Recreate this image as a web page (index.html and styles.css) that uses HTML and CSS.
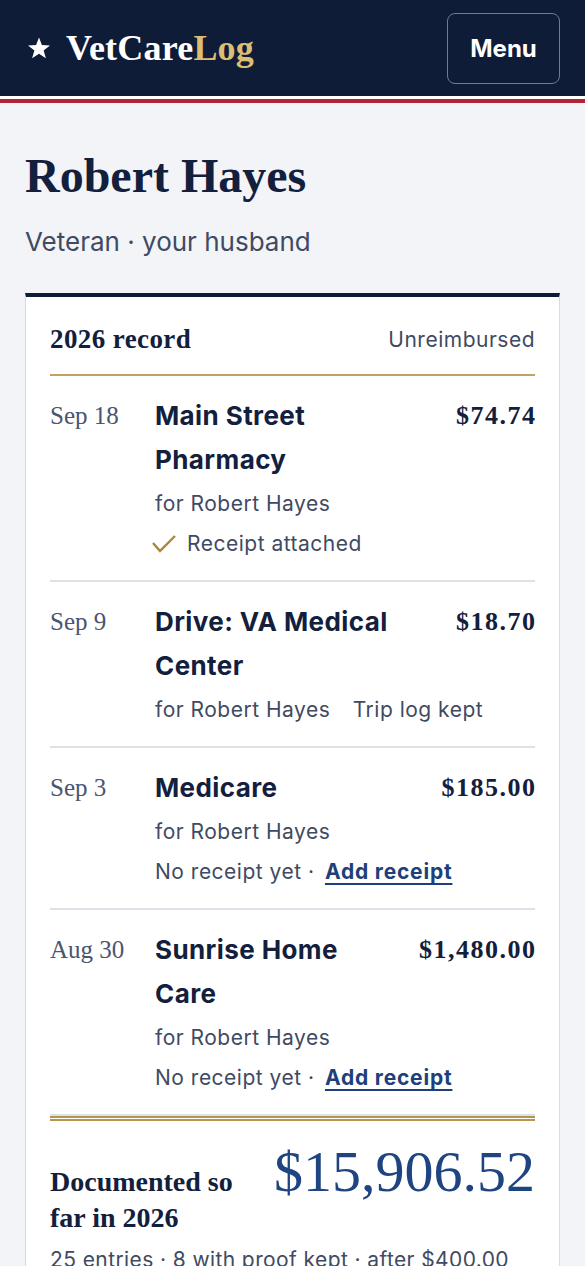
FILE: index.html
```html
<!DOCTYPE html>
<html lang="en">

<head>
  <meta charset="UTF-8">
  <meta name="viewport" content="width=device-width, initial-scale=1.0">
  <title>VetCareLog - Robert Hayes</title>
  <link rel="stylesheet" href="styles.css">
</head>

<body>
  <header class="topbar">
    <a href="#" class="brand">
      <svg class="brand-star" viewBox="0 0 24 24" width="24" height="24" aria-hidden="true">
        <path d="M12 1.5l2.9 7.6 8.1.3-6.4 5 2.3 7.9L12 17.7l-6.9 4.6 2.3-7.9-6.4-5 8.1-.3z" fill="#fff" />
      </svg>
      <span>VetCare<span class="brand-log">Log</span></span>
    </a>
    <button class="menu-button">Menu</button>
  </header>
  <div class="flag-stripe"></div>

  <main class="page">
    <h1 class="person-name">Robert Hayes</h1>
    <p class="person-role">Veteran · your husband</p>

    <section class="record-card">
      <div class="record-head">
        <h2>2026 record</h2>
        <span class="record-tag">Unreimbursed</span>
      </div>

      <div class="entry">
        <div class="entry-date">Sep 18</div>
        <div class="entry-body">
          <div class="entry-top">
            <div class="entry-title">Main Street Pharmacy</div>
            <div class="entry-amount">$74.74</div>
          </div>
          <div class="entry-meta first">for Robert Hayes</div>
          <div class="entry-meta proof">
            <svg viewBox="0 0 26 20" width="26" height="20" aria-hidden="true">
              <path d="M2 9l7 8L24 2" fill="none" stroke="#a98738" stroke-width="2.4" />
            </svg>
            Receipt attached
          </div>
        </div>
      </div>

      <div class="entry">
        <div class="entry-date">Sep 9</div>
        <div class="entry-body">
          <div class="entry-top">
            <div class="entry-title">Drive: VA Medical Center</div>
            <div class="entry-amount">$18.70</div>
          </div>
          <div class="entry-meta first">for Robert Hayes <span class="trip">Trip log kept</span></div>
        </div>
      </div>

      <div class="entry">
        <div class="entry-date">Sep 3</div>
        <div class="entry-body">
          <div class="entry-top">
            <div class="entry-title">Medicare</div>
            <div class="entry-amount">$185.00</div>
          </div>
          <div class="entry-meta first">for Robert Hayes</div>
          <div class="entry-meta">No receipt yet · <a href="#" class="add-link">Add receipt</a></div>
        </div>
      </div>

      <div class="entry">
        <div class="entry-date">Aug 30</div>
        <div class="entry-body">
          <div class="entry-top">
            <div class="entry-title">Sunrise Home Care</div>
            <div class="entry-amount">$1,480.00</div>
          </div>
          <div class="entry-meta first">for Robert Hayes</div>
          <div class="entry-meta">No receipt yet · <a href="#" class="add-link">Add receipt</a></div>
        </div>
      </div>

      <div class="record-total">
        <div class="total-row">
          <div class="total-label">Documented so far in 2026</div>
          <div class="total-amount">$15,906.52</div>
        </div>
        <p class="total-note">25 entries · 8 with proof kept · after $400.00 reimbursed</p>
      </div>
    </section>
  </main>
</body>

</html>
```

FILE: styles.css
```css
body {
  margin: 0;
  font-family: Inter, "Noto Sans", sans-serif;
  background-color: #f2f4f8;
  color: #13203d;
}

.topbar {
  height: 96px;
  background-color: #0f1c38;
  display: flex;
  align-items: center;
  justify-content: space-between;
  padding: 0 25px 0 27px;
  box-sizing: border-box;
}

.brand {
  display: flex;
  align-items: center;
  gap: 15px;
  color: #fff;
  text-decoration: none;
  font-family: "Liberation Serif", serif;
  font-weight: 700;
  font-size: 36px;
  letter-spacing: 0.2px;
}

.brand-star {
  width: 24px;
  height: 24px;
}

.brand-log {
  color: #dcbd74;
}

.menu-button {
  width: 113px;
  height: 71px;
  background: transparent;
  border: 1.5px solid #6e7b96;
  border-radius: 8px;
  color: #fff;
  font-family: Inter, sans-serif;
  font-weight: 700;
  font-size: 24px;
  cursor: pointer;
}

.flag-stripe {
  height: 4px;
  border-top: 3px solid #fff;
  background-color: #b42235;
}

.page {
  padding: 0 25px 40px;
}

.person-name {
  margin: 44px 0 0;
  font-family: "Liberation Serif", serif;
  font-weight: 700;
  font-size: 48px;
  line-height: 58px;
}

.person-role {
  margin: 19px 0 0;
  font-size: 26px;
  line-height: 36px;
  color: #3f4a63;
}

.record-card {
  margin-top: 33px;
  background-color: #fff;
  border: 1px solid #d6dbe5;
  border-top: 4px solid #0f1c38;
  padding: 24px 24px 0;
}

.record-head {
  display: flex;
  justify-content: space-between;
  align-items: center;
  padding-bottom: 17px;
  border-bottom: 2px solid #c2a25e;
}

.record-head h2 {
  margin: 0;
  font-family: "Liberation Serif", serif;
  font-weight: 700;
  font-size: 27px;
  line-height: 36px;
  letter-spacing: 0.4px;
}

.record-tag {
  font-size: 21px;
  letter-spacing: 0.5px;
  color: #3f4a63;
}

.entry {
  display: grid;
  grid-template-columns: 81px 1fr;
  column-gap: 24px;
  padding: 18px 0 16px;
  border-bottom: 2px solid #dde1e8;
}

.entry:last-of-type {
  border-bottom: none;
}

.entry-date {
  font-family: "Liberation Serif", serif;
  font-size: 25px;
  line-height: 44px;
  color: #4a5570;
}

.entry-top {
  display: flex;
  justify-content: space-between;
  align-items: flex-start;
  gap: 20px;
}

.entry-title {
  max-width: 240px;
  font-weight: 700;
  font-size: 26px;
  line-height: 44px;
  letter-spacing: 0.4px;
}

.entry-amount {
  font-family: "Liberation Serif", serif;
  font-weight: 700;
  font-size: 26px;
  line-height: 44px;
  letter-spacing: 1.5px;
  margin-right: -1.5px;
  white-space: nowrap;
}

.entry-meta {
  font-size: 21px;
  line-height: 40px;
  letter-spacing: 0.5px;
  color: #3f4a63;
}

.entry-meta.first {
  margin-top: 2px;
}

.proof {
  display: flex;
  align-items: center;
  gap: 10px;
  margin-left: -4px;
}

.trip {
  margin-left: 16px;
}

.add-link {
  color: #1d3f7a;
  font-weight: 700;
  letter-spacing: 0.8px;
  text-decoration: underline;
  text-decoration-thickness: 2px;
  text-underline-offset: 4px;
  margin-left: 4px;
}

.record-total {
  border-top: 5px double #b8954a;
  padding-top: 19px;
}

.total-row {
  display: flex;
  justify-content: space-between;
  align-items: baseline;
}

.total-label {
  max-width: 200px;
  font-family: "Liberation Serif", serif;
  font-weight: 700;
  font-size: 28px;
  line-height: 36px;
}

.total-amount {
  font-family: "Liberation Serif", serif;
  font-size: 58px;
  line-height: 64px;
  color: #1f4482;
}

.total-note {
  margin: 8px 0 0;
  font-size: 21px;
  line-height: 32px;
  letter-spacing: 0.4px;
  color: #3f4a63;
}
```
